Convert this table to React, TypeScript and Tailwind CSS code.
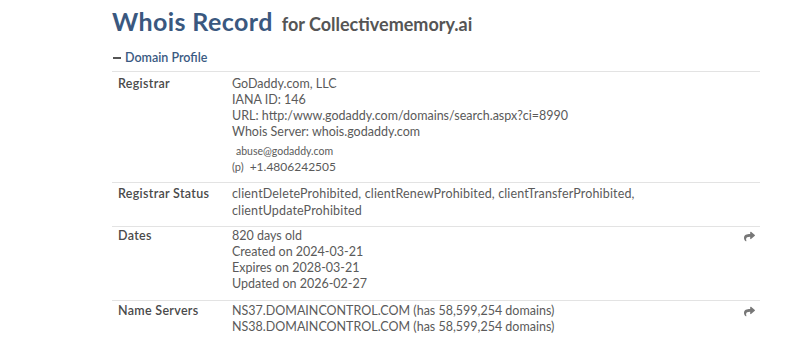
import { FaShare } from 'react-icons/fa';

const font = { fontFamily: 'Lato, "Open Sans", sans-serif' };

const Row = ({
  label,
  children,
  share,
  className = '',
}: {
  label: string;
  children: React.ReactNode;
  share?: boolean;
  className?: string;
}) => (
  <div className={`flex border-t border-[#e3e3e3] ${className}`}>
    <div className="w-[120px] shrink-0 pl-[6px] font-semibold tracking-[0.3px] text-[#4a4a4a]">{label}</div>
    <div className="flex-1 text-[#5a5a5a]">{children}</div>
    {share && (
      <div className="flex w-[24px] justify-end pt-[3px] pr-[5px] text-[#777]">
        <FaShare className="h-[11px] w-[11px]" />
      </div>
    )}
  </div>
);

const App = () => {
  return (
    <div className="h-[338px] w-[800px] bg-white" style={font}>
      <div className="ml-[112px] w-[648px] pt-[6px]">
        <h1 className="flex items-baseline gap-[9px] leading-[30px]">
          <span className="text-[25px] font-bold tracking-[0.4px] text-[#3a587f]">Whois Record</span>
          <span className="text-[18px] font-bold text-[#555]">for Collectivememory.ai</span>
        </h1>
        <div className="mt-[10px] flex items-center gap-[4px] pl-[1px] text-[12.5px] font-semibold text-[#3a5a82]">
          <span className="inline-block h-[2px] w-[8px] bg-[#555]" />
          Domain Profile
        </div>
        <div className="mt-[3px] text-[12.5px] leading-[16px]">
          <Row label="Registrar" className="pt-[4px] pb-[7px]">
            <div>GoDaddy.com, LLC</div>
            <div>IANA ID: 146</div>
            <div>URL: http:/www.godaddy.com/domains/search.aspx?ci=8990</div>
            <div>Whois Server: whois.godaddy.com</div>
            <div className="mt-[3px] pl-[4px] text-[10.5px]">abuse@godaddy.com</div>
            <div className="text-[12px]">
              <span className="mr-[6px] text-[11px]">(p)</span>+1.4806242505
            </div>
          </Row>
          <Row label="Registrar Status" className="pt-[2px] pb-[7px] leading-[17px]">
            <div className="tracking-[0.15px]">
              clientDeleteProhibited, clientRenewProhibited, clientTransferProhibited,
              <br />
              clientUpdateProhibited
            </div>
          </Row>
          <Row label="Dates" share className="pt-[1px] pb-[8px]">
            <div>820 days old</div>
            <div>Created on 2024-03-21</div>
            <div>Expires on 2028-03-21</div>
            <div>Updated on 2026-02-27</div>
          </Row>
          <Row label="Name Servers" share className="pt-[2px] pb-[7px]">
            <div>NS37.DOMAINCONTROL.COM (has 58,599,254 domains)</div>
            <div>NS38.DOMAINCONTROL.COM (has 58,599,254 domains)</div>
          </Row>
        </div>
      </div>
    </div>
  );
};

export default App;
